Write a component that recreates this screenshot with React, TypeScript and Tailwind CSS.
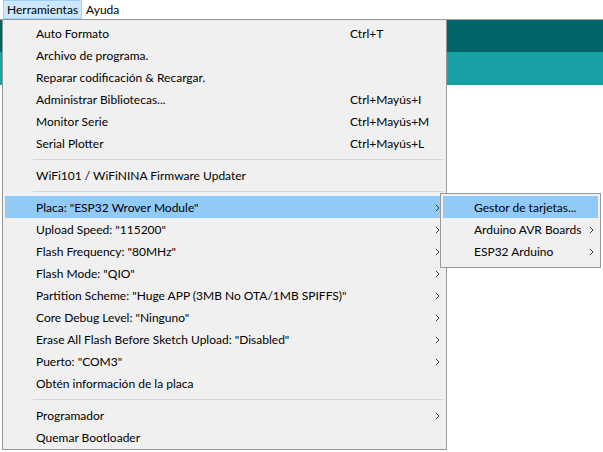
import React from 'react';

type Item =
  | { kind: 'item'; label: string; shortcut?: string; sub?: boolean; active?: boolean }
  | { kind: 'sep' };

const items: Item[] = [
  { kind: 'item', label: 'Auto Formato', shortcut: 'Ctrl+T' },
  { kind: 'item', label: 'Archivo de programa.' },
  { kind: 'item', label: 'Reparar codificación & Recargar.' },
  { kind: 'item', label: 'Administrar Bibliotecas...', shortcut: 'Ctrl+Mayús+I' },
  { kind: 'item', label: 'Monitor Serie', shortcut: 'Ctrl+Mayús+M' },
  { kind: 'item', label: 'Serial Plotter', shortcut: 'Ctrl+Mayús+L' },
  { kind: 'sep' },
  { kind: 'item', label: 'WiFi101 / WiFiNINA Firmware Updater' },
  { kind: 'sep' },
  { kind: 'item', label: 'Placa: "ESP32 Wrover Module"', sub: true, active: true },
  { kind: 'item', label: 'Upload Speed: "115200"', sub: true },
  { kind: 'item', label: 'Flash Frequency: "80MHz"', sub: true },
  { kind: 'item', label: 'Flash Mode: "QIO"', sub: true },
  { kind: 'item', label: 'Partition Scheme: "Huge APP (3MB No OTA/1MB SPIFFS)"', sub: true },
  { kind: 'item', label: 'Core Debug Level: "Ninguno"', sub: true },
  { kind: 'item', label: 'Erase All Flash Before Sketch Upload: "Disabled"', sub: true },
  { kind: 'item', label: 'Puerto: "COM3"', sub: true },
  { kind: 'item', label: 'Obtén información de la placa' },
  { kind: 'sep' },
  { kind: 'item', label: 'Programador', sub: true },
  { kind: 'item', label: 'Quemar Bootloader' },
];

const Chevron = () => (
  <svg width="5" height="8" viewBox="0 0 5 8" className="shrink-0">
    <path d="M0.8 0.8 L4 4 L0.8 7.2" fill="none" stroke="#3c3c3c" strokeWidth="1" />
  </svg>
);

export default function App() {
  return (
    <div
      className="relative w-[603px] h-[452px] overflow-hidden bg-white text-[12px] text-black"
      style={{ fontFamily: '"Segoe UI", Lato, "Noto Sans", sans-serif' }}
    >
      {/* menu bar */}
      <div className="h-[20px] border-b border-[#a0a0a0] flex items-stretch">
        <div className="ml-[3px] px-[3px] pt-px flex items-center bg-[#cce8ff] border border-[#99d1ff] leading-none">
          Herramientas
        </div>
        <div className="px-[4px] pt-px flex items-center leading-none">Ayuda</div>
      </div>

      {/* editor behind */}
      <div className="h-[32px] bg-[#006468]" />
      <div className="h-[33px] bg-[#17a1a5]" />

      {/* main dropdown */}
      <div className="absolute left-[2px] top-[19px] w-[445px] h-[431px] bg-[#f0f0f0] border border-[#999999] pt-[2px]">
        {items.map((it, i) =>
          it.kind === 'sep' ? (
            <div key={i} className="h-[10px] flex items-center pl-[30px] pr-[3px]">
              <div className="h-px w-full bg-[#d5d5d5]" />
            </div>
          ) : (
            <div
              key={i}
              className={`h-[22px] mx-[2px] flex items-center pl-[31px] pr-[4px] pt-[2px] whitespace-nowrap ${
                it.active ? 'bg-[#91c9f7]' : ''
              }`}
            >
              <span className="w-[314px] shrink-0">{it.label}</span>
              <span className="flex-1">{it.shortcut}</span>
              {it.sub && <Chevron />}
            </div>
          )
        )}
      </div>

      {/* submenu */}
      <div className="absolute left-[440px] top-[193px] w-[161px] h-[75px] bg-[#f0f0f0] border border-[#999999] pt-[2px]">
        <div className="h-[22px] mx-[2px] flex items-center pl-[31px] pt-[2px] bg-[#91c9f7] whitespace-nowrap">
          Gestor de tarjetas...
        </div>
        <div className="h-[22px] mx-[2px] flex items-center pl-[31px] pr-[4px] pt-[2px] whitespace-nowrap">
          <span className="flex-1">Arduino AVR Boards</span>
          <Chevron />
        </div>
        <div className="h-[22px] mx-[2px] flex items-center pl-[31px] pr-[4px] pt-[2px] whitespace-nowrap">
          <span className="flex-1">ESP32 Arduino</span>
          <Chevron />
        </div>
      </div>
    </div>
  );
}
